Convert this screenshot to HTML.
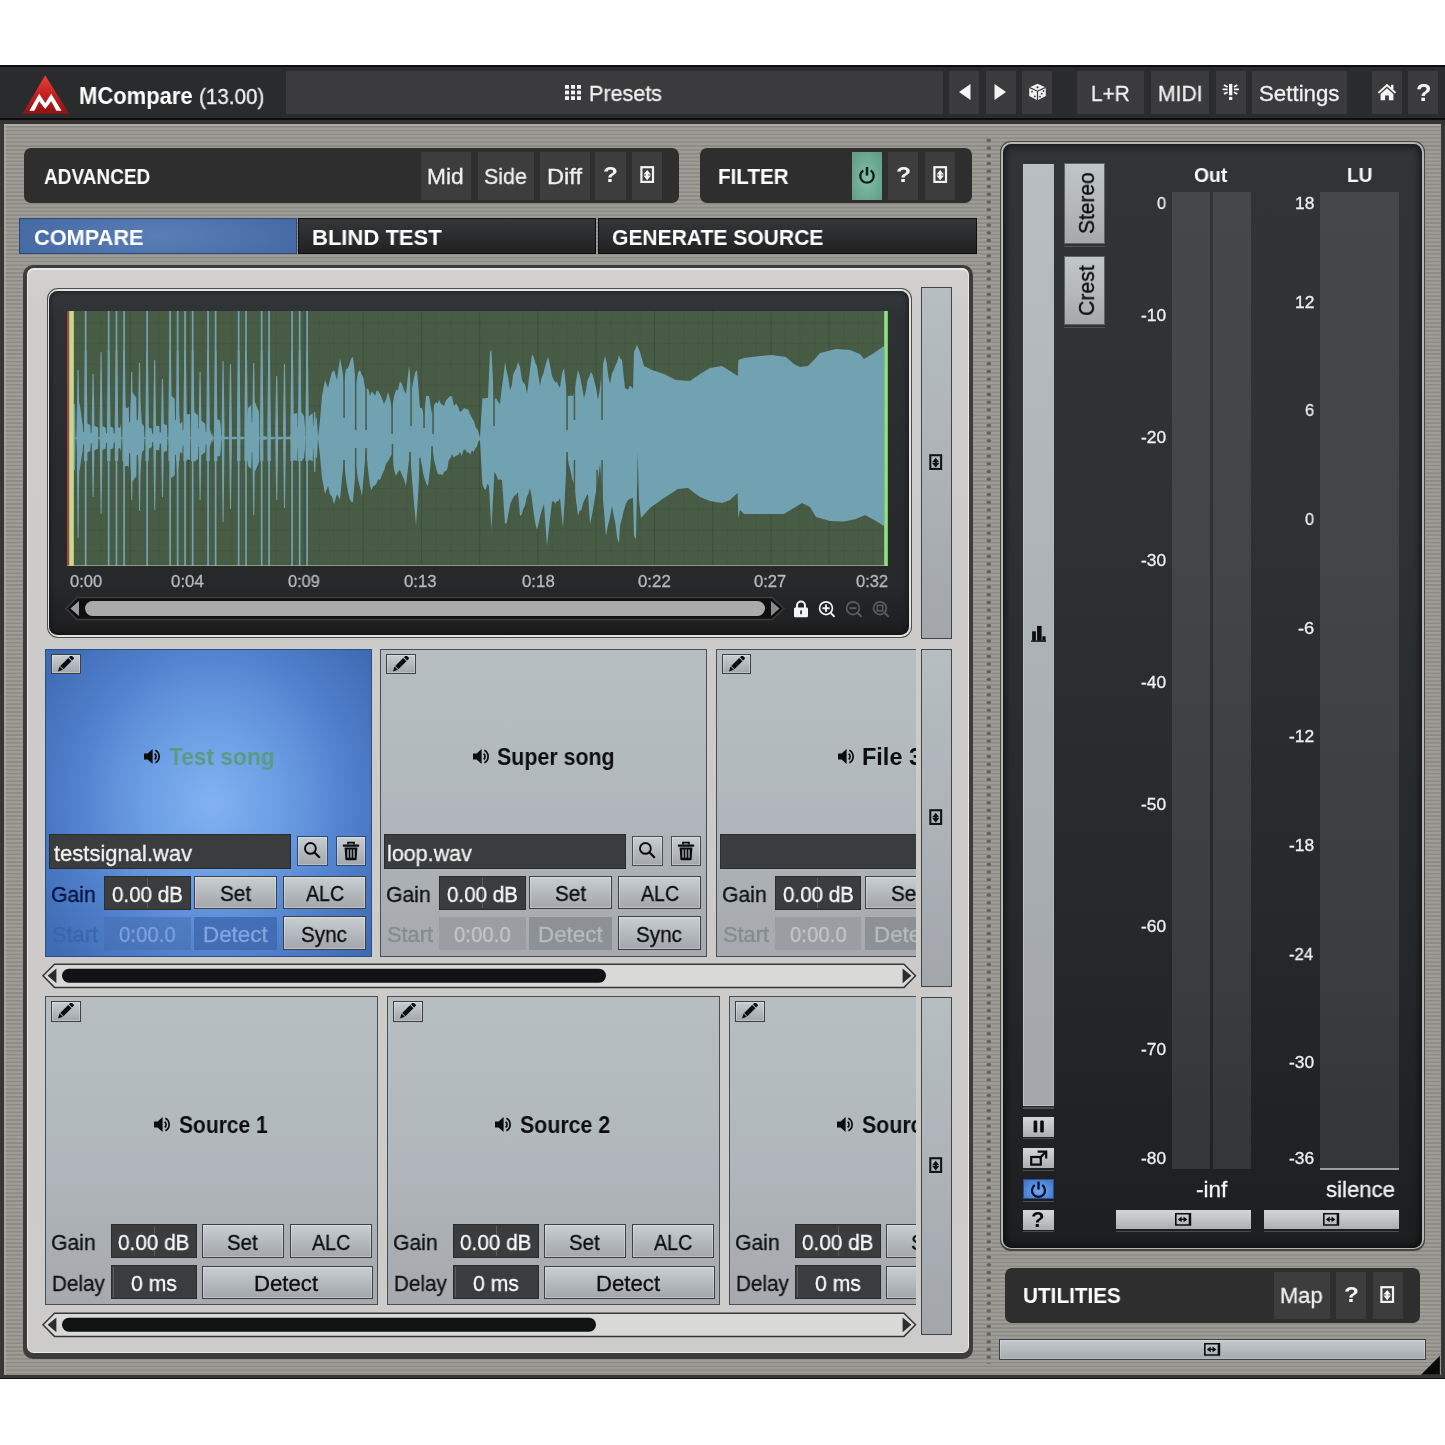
<!DOCTYPE html>
<html lang="en"><head><meta charset="utf-8"><title>MCompare</title>
<style>
html,body{margin:0;padding:0;background:#fff;}
body{width:1445px;height:1445px;overflow:hidden;font-family:"Liberation Sans",sans-serif;}
#root{position:relative;width:1445px;height:1445px;overflow:hidden;background:#fff;}
#root div,#root span.t,#root svg{position:absolute;box-sizing:border-box;}
span.t{white-space:nowrap;transform-origin:0 0;display:block;will-change:transform;}
.tex{background:repeating-linear-gradient(180deg,#9d9c96 0,#9d9c96 1.6px,#8c8b85 2.2px,#8c8b85 3.3px,#9d9c96 3.85px);}
.hb{background:#3b3b3d;}
.pb{background:#3d3d3d;}
.lb{background:linear-gradient(180deg,#c8ced1 0%,#b7bcc0 45%,#a3a6aa 100%);border:1.5px solid #3d4144;box-shadow:inset 0 0 0 1px rgba(255,255,255,.28);}
.df{background:#3a3c3d;border:1px solid #2a2c2d;}
.slot{background:linear-gradient(180deg,#b6bec1 0%,#b2b9bd 45%,#a6a9ae 100%);border:1.5px solid #4a4e52;}
.strip{background:linear-gradient(180deg,#b6bec1 0%,#adb3b7 50%,#a3a6ab 100%);border:1.3px solid #414447;}

</style></head>
<body>
<div id="root">
<div style="left:0px;top:65px;width:1445px;height:1314.3px;background:#363634;"></div>
<div style="left:0px;top:1378.3px;width:1445px;height:1px;background:#101010;"></div>
<div class="tex" style="left:3.9px;top:124.4px;width:1436.7px;height:1250.6px;"></div>
<div style="left:3.9px;top:124.4px;width:1436.7px;height:1.8px;background:#b4b3ad;opacity:.65;"></div>
<div style="left:3.9px;top:126px;width:1.8px;height:1249px;background:#b0afa9;opacity:.55;"></div>
<svg style="left:985px;top:136.8px" width="8" height="1227.4"><defs><pattern id="dots" width="8" height="7.7013" patternUnits="userSpaceOnUse"><ellipse cx="3.8" cy="3.4" rx="2.3" ry="1.7" fill="#605f5a"/></pattern></defs><rect width="8" height="1227.4" fill="url(#dots)"/></svg>
<div style="left:0px;top:65px;width:1445px;height:1.8px;background:#0e0e0f;"></div>
<div style="left:0px;top:66.8px;width:1445px;height:51.8px;background:#2a2b2d;"></div>
<div style="left:0px;top:118.4px;width:1445px;height:1.8px;background:#0d0d0d;"></div>
<div style="left:0px;top:120.2px;width:1445px;height:4.2px;background:#333333;"></div>
<svg style="left:21.5px;top:74px" width="48" height="41" viewBox="0 0 48 41"><defs><linearGradient id="lg" x1="0" y1="0" x2="0" y2="1"><stop offset="0" stop-color="#ee4038"/><stop offset=".5" stop-color="#c4211f"/><stop offset="1" stop-color="#8f1212"/></linearGradient></defs><path d="M23.2 1.3 L47.1 39.7 L.6 39.7 Z" fill="url(#lg)"/><path d="M7.4 36.8 L17.2 19.7 L23.2 28.9 L29.2 19.7 L39.6 36.8 L34.4 36.8 L29.2 27.2 L23.2 34.9 L17.2 27.2 L12.4 36.8 Z" fill="#fff"/></svg>
<span class="t" style="left:79.04px;top:85.13px;font-size:23px;line-height:23px;font-weight:bold;color:#fff;transform:scaleX(0.9568);">MCompare</span>
<span class="t" style="left:199.08px;top:85.55px;font-size:22.5px;line-height:22.5px;font-weight:normal;color:#f2f2f2;transform:scaleX(0.9169);-webkit-text-stroke:.3px #f2f2f2;">(13.00)</span>
<div class="hb" style="left:286px;top:71px;width:657px;height:43.4px;"></div>
<div class="hb" style="left:949px;top:71px;width:30px;height:43.4px;"></div>
<div class="hb" style="left:986px;top:71px;width:30px;height:43.4px;"></div>
<div class="hb" style="left:1022px;top:71px;width:30px;height:43.4px;"></div>
<div class="hb" style="left:1077px;top:71px;width:67px;height:43.4px;"></div>
<div class="hb" style="left:1151px;top:71px;width:58px;height:43.4px;"></div>
<div class="hb" style="left:1216px;top:71px;width:30px;height:43.4px;"></div>
<div class="hb" style="left:1252px;top:71px;width:95px;height:43.4px;"></div>
<div class="hb" style="left:1372px;top:71px;width:30px;height:43.4px;"></div>
<div class="hb" style="left:1408px;top:71px;width:30px;height:43.4px;"></div>
<svg style="left:565px;top:85px" width="16" height="16"><rect x="0" y="0.0" width="4" height="3.8" fill="#f4f4f4"/><rect x="0" y="5.6" width="4" height="3.8" fill="#f4f4f4"/><rect x="0" y="11.2" width="4" height="3.8" fill="#f4f4f4"/><rect x="6" y="0.0" width="4" height="3.8" fill="#f4f4f4"/><rect x="6" y="5.6" width="4" height="3.8" fill="#f4f4f4"/><rect x="6" y="11.2" width="4" height="3.8" fill="#f4f4f4"/><rect x="12" y="0.0" width="4" height="3.8" fill="#f4f4f4"/><rect x="12" y="5.6" width="4" height="3.8" fill="#f4f4f4"/><rect x="12" y="11.2" width="4" height="3.8" fill="#f4f4f4"/></svg>
<span class="t" style="left:589.02px;top:82.97px;font-size:22px;line-height:22px;font-weight:normal;color:#f0f0f0;transform:scaleX(0.9785);-webkit-text-stroke:.3px #f0f0f0;">Presets</span>
<svg style="left:958px;top:83px" width="14" height="18"><path d="M12.5 1 L12.5 17 L1 9 Z" fill="#f4f4f4"/></svg>
<svg style="left:993px;top:83px" width="14" height="18"><path d="M1.5 1 L1.5 17 L13 9 Z" fill="#f4f4f4"/></svg>
<svg style="left:1028px;top:83px" width="19" height="18" viewBox="0 0 19 18"><path d="M9.5 .8 L17.8 4.4 L17.8 13 L9.5 17.2 L1.2 13 L1.2 4.4 Z" fill="#f1f1f1"/><path d="M1.2 4.4 L9.5 8.2 L17.8 4.4 M9.5 8.2 L9.5 17.2" stroke="#3b3b3d" stroke-width="1.2" fill="none"/><circle cx="9.5" cy="4.3" r="1.1" fill="#3b3b3d"/><circle cx="4" cy="8.6" r=".9" fill="#3b3b3d"/><circle cx="6.8" cy="13.4" r=".9" fill="#3b3b3d"/><circle cx="12" cy="13.6" r=".9" fill="#3b3b3d"/><circle cx="13.7" cy="10.7" r=".9" fill="#3b3b3d"/><circle cx="15.5" cy="8" r=".9" fill="#3b3b3d"/></svg>
<span class="t" style="left:1091.05px;top:82.97px;font-size:22px;line-height:22px;font-weight:normal;color:#f0f0f0;transform:scaleX(0.9467);-webkit-text-stroke:.3px #f0f0f0;">L+R</span>
<span class="t" style="left:1158.04px;top:82.97px;font-size:22px;line-height:22px;font-weight:normal;color:#f0f0f0;transform:scaleX(0.9588);-webkit-text-stroke:.3px #f0f0f0;">MIDI</span>
<svg style="left:1221px;top:83px" width="20" height="18" viewBox="0 0 20 18"><rect x="8" y=".9" width="3.3" height="11.4" fill="#f4f4f4"/><rect x="8" y="13.9" width="3.3" height="3.1" fill="#f4f4f4"/><g stroke="#f4f4f4" stroke-width="1.8" fill="none"><path d="M1.6 6.45H6.6M13 6.45H18M3 2L6.6 4M3 10.9L6.6 9.2M16.3 2L13 4M16.3 10.9L13 9.2"/></g></svg>
<span class="t" style="left:1258.99px;top:82.97px;font-size:22px;line-height:22px;font-weight:normal;color:#f0f0f0;transform:scaleX(1.0128);-webkit-text-stroke:.3px #f0f0f0;">Settings</span>
<svg style="left:1377px;top:83px" width="20" height="18" viewBox="0 0 20 18"><path d="M10 .8 L19.2 9.2 L17.8 10.6 L10 3.6 L2.2 10.6 L.8 9.2 Z" fill="#f4f4f4"/><path d="M10 5.2 L16.4 10.9 L16.4 17.2 L11.9 17.2 L11.9 12.4 L8.1 12.4 L8.1 17.2 L3.6 17.2 L3.6 10.9 Z" fill="#f4f4f4"/><rect x="14" y="1.8" width="2.4" height="4.4" fill="#f4f4f4"/></svg>
<span class="t" style="left:1415.92px;top:81.59px;font-size:23.4px;line-height:23.4px;font-weight:bold;color:#f4f4f4;transform:scaleX(1.0833);">?</span>
<div style="left:24px;top:148px;width:655px;height:55px;background:#2e2e2f;border-radius:7px;"></div>
<span class="t" style="left:43.60px;top:165.56px;font-size:22.6px;line-height:22.6px;font-weight:bold;color:#fff;transform:scaleX(0.8410);">ADVANCED</span>
<div class="pb" style="left:420.6px;top:152px;width:50.4px;height:47.5px;"></div>
<div class="pb" style="left:477.6px;top:152px;width:56px;height:47.5px;"></div>
<div class="pb" style="left:540px;top:152px;width:49.6px;height:47.5px;"></div>
<div class="pb" style="left:595px;top:152px;width:31px;height:47.5px;"></div>
<div class="pb" style="left:632px;top:152px;width:30.4px;height:47.5px;"></div>
<span class="t" style="left:427.00px;top:165.56px;font-size:22.6px;line-height:22.6px;font-weight:normal;color:#f0f0f0;transform:scaleX(1.0046);-webkit-text-stroke:.3px #f0f0f0;">Mid</span>
<span class="t" style="left:484.05px;top:165.56px;font-size:22.6px;line-height:22.6px;font-weight:normal;color:#f0f0f0;transform:scaleX(0.9483);-webkit-text-stroke:.3px #f0f0f0;">Side</span>
<span class="t" style="left:546.55px;top:165.56px;font-size:22.6px;line-height:22.6px;font-weight:normal;color:#f0f0f0;transform:scaleX(1.0480);-webkit-text-stroke:.3px #f0f0f0;">Diff</span>
<span class="t" style="left:603.30px;top:163.60px;font-size:22.2px;line-height:22.2px;font-weight:bold;color:#f4f4f4;transform:scaleX(1.1000);">?</span>
<svg style="left:639.7px;top:166px" width="15" height="18" viewBox="0 0 15 18"><rect x="1.4" y="1.2" width="11.6" height="14.7" fill="none" stroke="#f4f4f4" stroke-width="2.2"/><path d="M7.2 3.9 L11 8.6 L8.3 8.6 L8.3 9.6 L11 9.6 L7.2 14.3 L3.4 9.6 L6.1 9.6 L6.1 8.6 L3.4 8.6 Z" fill="#f4f4f4"/></svg>
<div style="left:700px;top:148px;width:272px;height:55px;background:#2e2e2f;border-radius:7px;"></div>
<span class="t" style="left:718.09px;top:165.56px;font-size:22.6px;line-height:22.6px;font-weight:bold;color:#fff;transform:scaleX(0.9123);">FILTER</span>
<div style="left:852px;top:152px;width:30px;height:47.5px;background:radial-gradient(ellipse at 50% 55%,#86bfa9 0%,#6ba791 60%,#5f9a85 100%);"></div>
<svg style="left:857px;top:165px" width="20" height="21" viewBox="0 0 20 21"><path d="M6.3 5.4 A6.7 6.7 0 1 0 13.7 5.4" fill="none" stroke="#0c1c16" stroke-width="2.3"/><path d="M10 2 L10 10.6" stroke="#0c1c16" stroke-width="2.5"/></svg>
<div class="pb" style="left:888.4px;top:152px;width:30px;height:47.5px;"></div>
<div class="pb" style="left:925px;top:152px;width:30px;height:47.5px;"></div>
<span class="t" style="left:895.88px;top:163.60px;font-size:22.2px;line-height:22.2px;font-weight:bold;color:#f4f4f4;transform:scaleX(1.1167);">?</span>
<svg style="left:932.5px;top:166px" width="15" height="18" viewBox="0 0 15 18"><rect x="1.4" y="1.2" width="11.6" height="14.7" fill="none" stroke="#f4f4f4" stroke-width="2.2"/><path d="M7.2 3.9 L11 8.6 L8.3 8.6 L8.3 9.6 L11 9.6 L7.2 14.3 L3.4 9.6 L6.1 9.6 L6.1 8.6 L3.4 8.6 Z" fill="#f4f4f4"/></svg>
<div style="left:19px;top:217.6px;width:277.5px;height:36px;background:radial-gradient(ellipse 75% 160% at 50% 50%,#5a7fb6 0%,#4a6ea8 55%,#3d619b 100%);border:1px solid #2b4877;"></div>
<span class="t" style="left:34.00px;top:227.23px;font-size:22.4px;line-height:22.4px;font-weight:bold;color:#fff;transform:scaleX(0.9712);">COMPARE</span>
<div style="left:297.5px;top:217.6px;width:298.5px;height:36px;background:linear-gradient(180deg,#353637 0%,#2a2b2c 55%,#202122 100%);border:1px solid #0e0e0f;"></div>
<span class="t" style="left:311.62px;top:227.23px;font-size:22.4px;line-height:22.4px;font-weight:bold;color:#fff;transform:scaleX(0.9834);">BLIND TEST</span>
<div style="left:597.5px;top:217.6px;width:379.5px;height:36px;background:linear-gradient(180deg,#353637 0%,#2a2b2c 55%,#202122 100%);border:1px solid #0e0e0f;"></div>
<span class="t" style="left:611.60px;top:227.23px;font-size:22.4px;line-height:22.4px;font-weight:bold;color:#fff;transform:scaleX(0.9403);">GENERATE SOURCE</span>
<div style="left:23px;top:264.8px;width:950.2px;height:1094.2px;background:#3c3c3a;border-radius:10px;"></div>
<div style="left:26.7px;top:268.3px;width:942.8px;height:1085.2px;background:#eaeae8;border-radius:6.5px;"></div>
<div style="left:27.9px;top:269.6px;width:940.4px;height:1082.7px;background:linear-gradient(180deg,#d2d1cf 0%,#cdccca 4%,#cccbc9 60%,#cdccca 100%);border-radius:5.5px;"></div>
<div style="left:46.6px;top:288px;width:865.3px;height:350.2px;background:#4c4c4a;border-radius:11px;"></div>
<div style="left:47.7px;top:289.2px;width:862.9px;height:347.8px;background:#e2e2e1;border-radius:10px;"></div>
<div style="left:49.3px;top:290.9px;width:859.5px;height:344.4px;background:linear-gradient(180deg,#33373a 0%,#2d3134 8%,#26282a 85%,#1c1d1f 100%);border-radius:8.5px;box-shadow:inset 0 0 5px 1px rgba(0,0,0,.45);"></div>
<svg style="left:67px;top:311px" width="821" height="255.4" viewBox="0 0 821 255.4"><rect width="821" height="255.4" fill="#475b45"/><path d="M5.0 0V255.4" stroke="#3a4e38" stroke-width="1.2" opacity=".8"/><path d="M63.2 0V255.4" stroke="#3a4e38" stroke-width="1.2" opacity=".8"/><path d="M121.5 0V255.4" stroke="#3a4e38" stroke-width="1.2" opacity=".8"/><path d="M179.7 0V255.4" stroke="#3a4e38" stroke-width="1.2" opacity=".8"/><path d="M237.9 0V255.4" stroke="#3a4e38" stroke-width="1.2" opacity=".8"/><path d="M296.2 0V255.4" stroke="#3a4e38" stroke-width="1.2" opacity=".8"/><path d="M354.4 0V255.4" stroke="#3a4e38" stroke-width="1.2" opacity=".8"/><path d="M412.7 0V255.4" stroke="#3a4e38" stroke-width="1.2" opacity=".8"/><path d="M470.9 0V255.4" stroke="#3a4e38" stroke-width="1.2" opacity=".8"/><path d="M529.2 0V255.4" stroke="#3a4e38" stroke-width="1.2" opacity=".8"/><path d="M587.5 0V255.4" stroke="#3a4e38" stroke-width="1.2" opacity=".8"/><path d="M645.7 0V255.4" stroke="#3a4e38" stroke-width="1.2" opacity=".8"/><path d="M704.0 0V255.4" stroke="#3a4e38" stroke-width="1.2" opacity=".8"/><path d="M762.2 0V255.4" stroke="#3a4e38" stroke-width="1.2" opacity=".8"/><path d="M820.5 0V255.4" stroke="#3a4e38" stroke-width="1.2" opacity=".8"/><path d="M19.5 0V255.4" stroke="#3c503a" stroke-width="1" opacity=".35"/><path d="M34.1 0V255.4" stroke="#3c503a" stroke-width="1" opacity=".35"/><path d="M48.6 0V255.4" stroke="#3c503a" stroke-width="1" opacity=".35"/><path d="M77.8 0V255.4" stroke="#3c503a" stroke-width="1" opacity=".35"/><path d="M92.3 0V255.4" stroke="#3c503a" stroke-width="1" opacity=".35"/><path d="M106.9 0V255.4" stroke="#3c503a" stroke-width="1" opacity=".35"/><path d="M136.0 0V255.4" stroke="#3c503a" stroke-width="1" opacity=".35"/><path d="M150.6 0V255.4" stroke="#3c503a" stroke-width="1" opacity=".35"/><path d="M165.1 0V255.4" stroke="#3c503a" stroke-width="1" opacity=".35"/><path d="M194.3 0V255.4" stroke="#3c503a" stroke-width="1" opacity=".35"/><path d="M208.8 0V255.4" stroke="#3c503a" stroke-width="1" opacity=".35"/><path d="M223.4 0V255.4" stroke="#3c503a" stroke-width="1" opacity=".35"/><path d="M252.5 0V255.4" stroke="#3c503a" stroke-width="1" opacity=".35"/><path d="M267.1 0V255.4" stroke="#3c503a" stroke-width="1" opacity=".35"/><path d="M281.6 0V255.4" stroke="#3c503a" stroke-width="1" opacity=".35"/><path d="M310.8 0V255.4" stroke="#3c503a" stroke-width="1" opacity=".35"/><path d="M325.3 0V255.4" stroke="#3c503a" stroke-width="1" opacity=".35"/><path d="M339.9 0V255.4" stroke="#3c503a" stroke-width="1" opacity=".35"/><path d="M369.0 0V255.4" stroke="#3c503a" stroke-width="1" opacity=".35"/><path d="M383.6 0V255.4" stroke="#3c503a" stroke-width="1" opacity=".35"/><path d="M398.1 0V255.4" stroke="#3c503a" stroke-width="1" opacity=".35"/><path d="M427.3 0V255.4" stroke="#3c503a" stroke-width="1" opacity=".35"/><path d="M441.8 0V255.4" stroke="#3c503a" stroke-width="1" opacity=".35"/><path d="M456.4 0V255.4" stroke="#3c503a" stroke-width="1" opacity=".35"/><path d="M485.5 0V255.4" stroke="#3c503a" stroke-width="1" opacity=".35"/><path d="M500.1 0V255.4" stroke="#3c503a" stroke-width="1" opacity=".35"/><path d="M514.6 0V255.4" stroke="#3c503a" stroke-width="1" opacity=".35"/><path d="M543.8 0V255.4" stroke="#3c503a" stroke-width="1" opacity=".35"/><path d="M558.3 0V255.4" stroke="#3c503a" stroke-width="1" opacity=".35"/><path d="M572.9 0V255.4" stroke="#3c503a" stroke-width="1" opacity=".35"/><path d="M602.0 0V255.4" stroke="#3c503a" stroke-width="1" opacity=".35"/><path d="M616.6 0V255.4" stroke="#3c503a" stroke-width="1" opacity=".35"/><path d="M631.1 0V255.4" stroke="#3c503a" stroke-width="1" opacity=".35"/><path d="M660.3 0V255.4" stroke="#3c503a" stroke-width="1" opacity=".35"/><path d="M674.8 0V255.4" stroke="#3c503a" stroke-width="1" opacity=".35"/><path d="M689.4 0V255.4" stroke="#3c503a" stroke-width="1" opacity=".35"/><path d="M718.5 0V255.4" stroke="#3c503a" stroke-width="1" opacity=".35"/><path d="M733.1 0V255.4" stroke="#3c503a" stroke-width="1" opacity=".35"/><path d="M747.6 0V255.4" stroke="#3c503a" stroke-width="1" opacity=".35"/><path d="M776.8 0V255.4" stroke="#3c503a" stroke-width="1" opacity=".35"/><path d="M791.3 0V255.4" stroke="#3c503a" stroke-width="1" opacity=".35"/><path d="M805.9 0V255.4" stroke="#3c503a" stroke-width="1" opacity=".35"/><path d="M0 11.9H821.0" stroke="#3c503a" stroke-width="1" opacity=".4"/><path d="M0 32.6H821.0" stroke="#3c503a" stroke-width="1" opacity=".4"/><path d="M0 53.3H821.0" stroke="#3c503a" stroke-width="1" opacity=".4"/><path d="M0 74.0H821.0" stroke="#3c503a" stroke-width="1" opacity=".4"/><path d="M0 94.7H821.0" stroke="#3c503a" stroke-width="1" opacity=".4"/><path d="M0 115.4H821.0" stroke="#3c503a" stroke-width="1" opacity=".4"/><path d="M0 136.1H821.0" stroke="#3c503a" stroke-width="1" opacity=".4"/><path d="M0 156.8H821.0" stroke="#3c503a" stroke-width="1" opacity=".4"/><path d="M0 177.5H821.0" stroke="#3c503a" stroke-width="1" opacity=".4"/><path d="M0 198.2H821.0" stroke="#3c503a" stroke-width="1" opacity=".4"/><path d="M0 218.9H821.0" stroke="#3c503a" stroke-width="1" opacity=".4"/><path d="M0 239.6H821.0" stroke="#3c503a" stroke-width="1" opacity=".4"/><g fill="#70a2b2"><rect x="17.8" y="0" width="1.7" height="255.4"/><path d="M17.8 40 L17.0 110 L17.0 150 L20.4 150 L20.4 110 L19.5 40Z"/><rect x="40.8" y="0" width="1.7" height="255.4"/><path d="M40.8 40 L40.0 110 L40.0 150 L43.4 150 L43.4 110 L42.5 40Z"/><rect x="48.6" y="0" width="1.7" height="255.4"/><path d="M48.6 40 L47.8 110 L47.8 150 L51.2 150 L51.2 110 L50.3 40Z"/><rect x="56.2" y="0" width="1.7" height="255.4"/><path d="M56.2 40 L55.4 110 L55.4 150 L58.8 150 L58.8 110 L57.9 40Z"/><rect x="79.2" y="0" width="1.7" height="255.4"/><path d="M79.2 40 L78.4 110 L78.4 150 L81.8 150 L81.8 110 L80.9 40Z"/><rect x="102.2" y="0" width="1.7" height="255.4"/><path d="M102.2 40 L101.4 110 L101.4 150 L104.8 150 L104.8 110 L103.9 40Z"/><rect x="109.8" y="0" width="1.7" height="255.4"/><path d="M109.8 40 L109.0 110 L109.0 150 L112.4 150 L112.4 110 L111.5 40Z"/><rect x="117.2" y="0" width="1.7" height="255.4"/><path d="M117.2 40 L116.4 110 L116.4 150 L119.8 150 L119.8 110 L118.9 40Z"/><rect x="124.8" y="0" width="1.7" height="255.4"/><path d="M124.8 40 L124.0 110 L124.0 150 L127.4 150 L127.4 110 L126.5 40Z"/><rect x="140.2" y="0" width="1.7" height="255.4"/><path d="M140.2 40 L139.4 110 L139.4 150 L142.8 150 L142.8 110 L141.9 40Z"/><rect x="147.8" y="0" width="1.7" height="255.4"/><path d="M147.8 40 L147.0 110 L147.0 150 L150.4 150 L150.4 110 L149.5 40Z"/><rect x="170.8" y="0" width="1.7" height="255.4"/><path d="M170.8 40 L170.0 110 L170.0 150 L173.4 150 L173.4 110 L172.5 40Z"/><rect x="178.2" y="0" width="1.7" height="255.4"/><path d="M178.2 40 L177.4 110 L177.4 150 L180.8 150 L180.8 110 L179.9 40Z"/><rect x="193.8" y="0" width="1.7" height="255.4"/><path d="M193.8 40 L193.0 110 L193.0 150 L196.4 150 L196.4 110 L195.5 40Z"/><rect x="201.2" y="0" width="1.7" height="255.4"/><path d="M201.2 40 L200.4 110 L200.4 150 L203.8 150 L203.8 110 L202.9 40Z"/><rect x="224.2" y="0" width="1.7" height="255.4"/><path d="M224.2 40 L223.4 110 L223.4 150 L226.8 150 L226.8 110 L225.9 40Z"/><rect x="231.8" y="0" width="1.7" height="255.4"/><path d="M231.8 40 L231.0 110 L231.0 150 L234.4 150 L234.4 110 L233.5 40Z"/><rect x="239.2" y="0" width="1.7" height="255.4"/><path d="M239.2 40 L238.4 110 L238.4 150 L241.8 150 L241.8 110 L240.9 40Z"/><path d="M10.5 59.0 L9.6 117.0 L9.8 139.0 L10.6 227.0 L11.6 227.0 L12.4 139.0 L12.5 117.0 L11.6 59.0Z"/><path d="M25.5 63.0 L24.6 117.0 L24.8 139.0 L25.6 186.0 L26.6 186.0 L27.4 139.0 L27.5 117.0 L26.6 63.0Z"/><path d="M33.5 41.0 L32.6 117.0 L32.8 139.0 L33.6 203.0 L34.6 203.0 L35.4 139.0 L35.5 117.0 L34.6 41.0Z"/><path d="M64.1 61.0 L63.2 117.0 L63.4 139.0 L64.2 189.0 L65.2 189.0 L66.0 139.0 L66.1 117.0 L65.2 61.0Z"/><path d="M71.9 52.0 L71.0 117.0 L71.2 139.0 L72.0 200.0 L73.0 200.0 L73.8 139.0 L73.9 117.0 L73.0 52.0Z"/><path d="M87.1 49.0 L86.2 117.0 L86.4 139.0 L87.2 199.0 L88.2 199.0 L89.0 139.0 L89.1 117.0 L88.2 49.0Z"/><path d="M94.9 68.0 L94.0 117.0 L94.2 139.0 L95.0 186.0 L96.0 186.0 L96.8 139.0 L96.9 117.0 L96.0 68.0Z"/><path d="M132.5 61.0 L131.6 117.0 L131.8 139.0 L132.6 189.0 L133.6 189.0 L134.4 139.0 L134.5 117.0 L133.6 61.0Z"/><path d="M155.5 50.0 L154.6 117.0 L154.8 139.0 L155.6 211.0 L156.6 211.0 L157.4 139.0 L157.5 117.0 L156.6 50.0Z"/><path d="M162.9 53.0 L162.0 117.0 L162.2 139.0 L163.0 198.0 L164.0 198.0 L164.8 139.0 L164.9 117.0 L164.0 53.0Z"/><path d="M186.1 52.0 L185.2 117.0 L185.4 139.0 L186.2 204.0 L187.2 204.0 L188.0 139.0 L188.1 117.0 L187.2 52.0Z"/><path d="M209.1 65.0 L208.2 117.0 L208.4 139.0 L209.2 189.0 L210.2 189.0 L211.0 139.0 L211.1 117.0 L210.2 65.0Z"/><path d="M216.9 53.0 L216.0 117.0 L216.2 139.0 L217.0 197.0 L218.0 197.0 L218.8 139.0 L218.9 117.0 L218.0 53.0Z"/><path d="M247.1 101.0 L246.2 117.0 L246.4 139.0 L247.2 161.0 L248.2 161.0 L249.0 139.0 L249.1 117.0 L248.2 101.0Z"/><path d="M7.0 93.0 L8.0 93.3 L8.4 126.2 L9.5 126.2 L11.9 90.7 L13.0 95.0 L15.4 113.0 L15.7 113.0 L16.1 120.7 L17.2 120.8 L19.6 111.9 L23.0 114.0 L23.3 114.3 L23.7 121.5 L24.8 122.0 L25.0 116.0 L27.2 114.8 L31.0 116.2 L31.4 126.2 L32.5 126.2 L34.9 115.1 L38.7 116.5 L39.1 122.3 L40.2 122.3 L42.6 115.4 L46.3 116.8 L46.7 122.4 L47.8 122.4 L50.2 115.7 L53.0 117.0 L54.0 112.5 L54.4 126.2 L55.5 126.2 L56.6 101.0 L57.9 96.6 L61.0 97.0 L61.7 94.8 L62.1 111.9 L63.2 110.2 L64.0 87.0 L65.6 81.3 L68.0 85.0 L69.3 86.6 L69.7 109.0 L70.8 109.6 L73.0 91.0 L73.2 89.6 L75.0 113.0 L77.0 115.0 L77.4 126.2 L78.5 126.2 L79.0 117.0 L80.9 116.1 L84.7 117.7 L85.1 122.8 L86.2 122.9 L87.0 118.0 L88.6 114.3 L89.0 115.0 L92.3 114.7 L92.7 121.5 L93.8 121.4 L96.2 112.9 L100.0 114.1 L100.4 126.2 L101.0 126.2 L101.5 126.2 L103.9 85.3 L104.0 84.4 L107.7 87.8 L108.1 109.3 L109.2 109.1 L110.0 87.0 L111.6 97.4 L113.0 113.0 L115.3 110.2 L115.7 119.2 L116.8 118.6 L118.0 107.0 L119.2 103.5 L123.0 103.0 L123.0 103.0 L123.4 126.2 L124.5 126.2 L126.9 100.7 L130.7 104.0 L131.0 104.0 L131.1 116.8 L132.2 118.5 L133.0 111.0 L134.6 109.7 L138.3 113.0 L138.7 120.8 L139.8 121.0 L141.0 114.0 L142.2 116.3 L145.0 125.0 L146.0 121.5 L146.4 126.2 L147.5 126.2 L149.0 111.0 L149.9 108.6 L153.0 109.0 L153.7 114.7 L154.1 123.0 L155.0 126.5 L155.2 126.5 L157.6 125.7 L161.3 125.8 L161.7 126.5 L162.8 126.5 L165.2 125.7 L169.0 125.8 L169.4 126.2 L170.5 126.2 L172.9 125.7 L176.7 125.8 L177.1 126.5 L178.2 126.5 L179.0 125.8 L180.6 100.3 L181.0 97.0 L184.3 93.7 L184.7 111.8 L185.8 111.3 L186.0 92.0 L188.2 91.6 L192.0 101.0 L192.0 101.1 L192.4 126.2 L193.5 126.2 L195.0 125.0 L195.9 124.9 L199.7 125.6 L200.1 126.4 L201.0 126.5 L201.2 126.5 L203.6 125.7 L207.3 125.8 L207.7 126.5 L208.8 126.5 L211.2 125.7 L215.0 125.8 L215.4 126.2 L216.5 126.2 L218.9 125.7 L222.7 125.8 L223.0 125.8 L223.1 126.1 L224.2 121.5 L225.0 107.0 L226.6 102.8 L230.0 102.0 L230.3 102.1 L230.7 115.9 L231.8 116.1 L234.2 101.0 L237.0 105.0 L238.0 115.7 L238.4 126.2 L239.0 126.2 L239.5 126.2 L241.0 109.0 L241.9 105.3 L245.7 102.0 L246.1 115.5 L247.0 114.9 L247.2 115.1 L249.6 105.4 L250.0 109.0 L251.0 126.2 L253.0 109.0 L255.0 85.0 L258.0 69.0 L261.0 77.0 L263.0 68.3 L265.0 61.1 L267.0 59.0 L270.0 69.0 L273.0 47.0 L275.0 57.6 L277.0 69.0 L279.0 58.5 L281.0 57.0 L282.7 52.1 L284.3 47.2 L286.0 46.0 L289.0 73.0 L291.0 61.4 L293.0 59.0 L294.7 63.6 L296.3 66.3 L298.0 77.0 L299.7 77.7 L301.3 77.8 L303.0 85.0 L304.7 80.3 L306.3 82.3 L308.0 84.8 L309.7 79.5 L311.3 79.9 L313.0 83.0 L315.0 87.4 L317.0 93.0 L319.0 88.6 L321.0 81.0 L323.0 88.0 L325.0 97.0 L327.0 85.8 L329.0 79.0 L331.0 78.8 L333.0 70.3 L335.0 73.0 L337.0 79.0 L339.0 83.0 L342.0 55.0 L345.0 77.0 L346.7 68.0 L348.3 61.0 L350.0 59.0 L353.0 97.0 L355.0 96.8 L357.0 105.0 L359.0 85.0 L362.0 85.0 L365.0 103.0 L367.0 94.2 L369.0 91.0 L370.6 92.5 L372.2 88.9 L373.8 92.5 L375.4 93.7 L377.0 95.0 L379.0 89.3 L381.0 87.2 L383.0 85.0 L385.0 85.4 L387.0 95.0 L389.0 92.4 L391.0 95.4 L393.0 101.0 L395.0 99.8 L397.0 97.0 L399.0 98.0 L401.0 98.2 L403.0 103.1 L405.0 107.0 L407.0 110.2 L409.0 117.0 L411.0 118.9 L413.0 126.6 L415.4 87.0 L417.3 87.6 L419.1 86.9 L421.0 87.0 L423.0 41.0 L424.4 39.0 L427.0 89.0 L429.0 87.0 L431.0 90.7 L433.0 93.0 L434.7 77.7 L436.3 66.1 L438.0 51.0 L439.7 60.4 L441.3 66.7 L443.0 79.0 L444.6 75.3 L446.2 63.6 L447.8 60.1 L449.4 56.9 L451.0 51.0 L453.0 56.1 L455.0 69.0 L456.7 72.1 L458.3 73.6 L460.0 83.0 L461.7 69.3 L463.3 56.7 L465.0 43.0 L466.7 46.0 L468.3 52.1 L470.0 55.0 L473.0 75.0 L474.6 66.4 L476.2 63.3 L477.8 56.8 L479.4 50.9 L481.0 46.0 L483.0 53.7 L485.0 65.0 L486.6 68.3 L488.2 71.4 L489.8 70.5 L491.4 74.2 L493.0 77.0 L495.0 62.4 L497.0 57.0 L500.0 85.0 L502.0 84.9 L504.0 84.5 L506.0 85.0 L507.7 78.3 L509.3 68.4 L511.0 59.0 L513.0 65.3 L515.0 75.4 L517.0 87.0 L518.8 80.2 L520.5 69.2 L522.2 65.7 L524.0 61.0 L525.8 64.2 L527.5 70.8 L529.2 77.4 L531.0 89.0 L532.8 78.4 L534.5 62.9 L536.2 52.7 L538.0 45.0 L539.7 52.1 L541.3 64.8 L543.0 73.0 L544.8 62.8 L546.6 59.5 L548.4 54.4 L550.2 51.0 L552.0 44.0 L553.0 47.0 L555.0 49.0 L558.0 77.0 L559.6 77.9 L561.2 78.4 L562.8 74.5 L564.4 75.7 L566.0 78.0 L567.0 41.0 L570.0 34.0 L573.0 41.0 L577.0 55.0 L585.0 59.0 L597.0 63.0 L609.0 69.0 L623.0 70.0 L633.0 63.0 L643.0 57.0 L655.0 55.0 L663.0 60.0 L670.8 65.0 L671.4 49.0 L677.0 47.0 L693.0 45.0 L705.0 44.0 L719.0 46.0 L727.0 53.0 L733.0 56.0 L741.0 55.0 L747.0 49.0 L753.0 42.0 L769.0 38.0 L783.0 39.0 L793.0 43.0 L797.0 48.0 L807.0 42.0 L817.0 35.0 L817.0 215.0 L809.0 210.0 L798.0 204.0 L789.0 208.0 L777.0 210.6 L763.0 210.0 L749.0 206.0 L743.0 196.0 L735.0 192.0 L727.0 197.0 L717.0 203.0 L693.0 203.0 L677.0 203.0 L673.0 199.0 L671.4 207.0 L670.6 182.0 L663.0 189.0 L655.0 192.0 L643.0 190.0 L633.0 186.0 L621.0 177.0 L611.0 178.0 L597.0 187.0 L583.0 197.0 L574.0 207.0 L572.0 189.0 L571.4 169.0 L570.6 141.0 L570.2 169.0 L569.0 228.0 L567.0 225.0 L566.0 187.0 L564.3 187.4 L562.7 187.9 L561.0 189.0 L559.0 192.6 L557.0 199.0 L555.0 207.4 L553.0 215.0 L552.0 232.0 L550.2 227.2 L548.5 212.9 L546.8 204.7 L545.0 195.0 L543.0 206.6 L541.0 214.1 L539.0 225.0 L537.0 199.7 L535.0 177.6 L533.0 153.0 L531.3 166.6 L529.7 176.6 L528.0 186.4 L526.3 196.5 L524.7 205.4 L523.0 213.0 L521.0 183.0 L519.3 185.0 L517.7 188.4 L516.0 192.4 L514.3 199.5 L512.7 199.6 L511.0 205.0 L509.0 189.2 L507.0 173.0 L505.2 168.2 L503.5 160.0 L501.8 153.8 L500.0 141.0 L498.0 183.8 L496.0 217.0 L493.0 187.0 L491.4 190.3 L489.8 190.0 L488.2 192.8 L486.6 190.0 L485.0 191.0 L483.3 204.9 L481.7 219.7 L480.0 235.0 L477.0 193.0 L475.2 198.5 L473.5 204.1 L471.8 211.8 L470.0 219.0 L468.2 211.9 L466.5 200.7 L464.8 187.0 L463.0 177.0 L461.3 182.9 L459.7 185.9 L458.0 194.8 L456.3 198.1 L454.7 203.5 L453.0 205.0 L451.0 181.0 L449.0 183.8 L447.0 185.3 L445.0 189.0 L443.2 193.2 L441.5 202.3 L439.8 211.8 L438.0 213.0 L435.0 169.0 L433.1 168.2 L431.2 169.0 L429.3 164.3 L427.4 161.0 L424.4 219.0 L422.0 175.0 L420.4 172.8 L418.7 178.8 L417.0 177.4 L415.4 173.0 L413.0 129.0 L411.4 130.2 L409.8 136.1 L408.2 137.6 L406.6 141.3 L405.0 139.0 L403.3 143.7 L401.6 141.2 L399.9 141.6 L398.1 138.2 L396.4 139.5 L394.7 144.9 L393.0 141.0 L391.4 143.9 L389.8 144.4 L388.2 145.4 L386.6 146.6 L385.0 143.0 L383.4 147.3 L381.8 149.1 L380.2 158.6 L378.6 159.9 L377.0 161.0 L375.4 164.5 L373.8 163.3 L372.2 163.6 L370.6 162.4 L369.0 157.0 L367.0 148.6 L365.0 135.0 L363.0 158.9 L361.0 175.0 L359.4 172.9 L357.8 168.3 L356.2 162.8 L354.6 153.2 L353.0 147.0 L351.0 185.3 L349.0 215.0 L347.0 192.5 L345.0 167.9 L343.0 141.0 L341.0 157.4 L339.0 175.0 L337.0 168.5 L335.0 163.9 L333.0 159.0 L331.0 160.7 L329.0 165.0 L327.0 158.6 L325.0 143.0 L323.0 146.6 L321.0 150.3 L319.0 153.0 L317.0 159.7 L315.0 163.8 L313.0 169.0 L311.3 168.3 L309.7 172.0 L308.0 174.4 L306.3 175.1 L304.7 179.0 L303.0 175.0 L301.0 159.2 L299.0 137.0 L297.0 161.9 L295.0 185.0 L293.0 176.6 L291.0 168.4 L289.0 155.0 L286.0 191.0 L284.3 191.0 L282.7 188.1 L281.0 181.0 L279.0 168.9 L277.0 149.0 L275.0 167.3 L273.0 189.0 L270.0 183.0 L267.0 193.0 L265.0 185.8 L263.0 183.5 L261.0 175.0 L258.0 183.0 L255.0 167.0 L253.0 145.0 L251.0 127.8 L250.0 145.0 L249.6 148.3 L247.2 138.1 L247.0 138.2 L246.1 137.8 L245.7 150.5 L241.9 148.3 L241.0 145.0 L239.5 127.8 L239.0 127.8 L238.4 127.8 L238.0 137.3 L237.0 147.0 L234.2 150.7 L231.8 137.0 L230.7 137.2 L230.3 149.9 L230.0 150.0 L226.6 148.9 L225.0 145.0 L224.2 132.0 L223.1 127.8 L223.0 128.2 L222.7 128.2 L218.9 128.3 L216.5 127.8 L215.4 127.8 L215.0 128.2 L211.2 128.3 L208.8 127.5 L207.7 127.5 L207.3 128.2 L203.6 128.3 L201.2 127.5 L201.0 127.5 L200.1 127.6 L199.7 128.4 L195.9 129.1 L195.0 129.0 L193.5 127.8 L192.4 127.8 L192.0 150.9 L192.0 151.0 L188.2 160.2 L186.0 160.0 L185.8 141.8 L184.7 141.3 L184.3 158.3 L181.0 155.0 L180.6 152.0 L179.0 128.2 L178.2 127.5 L177.1 127.5 L176.7 128.2 L172.9 128.3 L170.5 127.8 L169.4 127.8 L169.0 128.2 L165.2 128.3 L162.8 127.5 L161.7 127.5 L161.3 128.2 L157.6 128.3 L155.2 127.5 L155.0 127.5 L154.1 131.0 L153.7 139.3 L153.0 145.0 L149.9 145.4 L149.0 143.0 L147.5 127.8 L146.4 127.8 L146.0 132.5 L145.0 129.0 L142.2 137.7 L141.0 140.0 L139.8 133.0 L138.7 133.2 L138.3 141.0 L134.6 144.3 L133.0 143.0 L132.2 135.1 L131.1 136.4 L131.0 148.0 L130.7 148.0 L126.9 151.1 L124.5 127.8 L123.4 127.8 L123.0 149.0 L123.0 149.0 L119.2 148.3 L118.0 145.0 L116.8 134.7 L115.7 134.3 L115.3 142.9 L113.0 141.0 L111.6 155.5 L110.0 165.0 L109.2 144.0 L108.1 143.8 L107.7 164.2 L104.0 167.3 L103.9 166.5 L101.5 127.8 L101.0 127.8 L100.4 127.8 L100.0 139.9 L96.2 141.1 L93.8 132.6 L92.7 132.5 L92.3 139.3 L89.0 139.0 L88.6 139.7 L87.0 136.0 L86.2 131.1 L85.1 131.2 L84.7 136.3 L80.9 137.9 L79.0 137.0 L78.5 127.8 L77.4 127.8 L77.0 139.0 L75.0 141.0 L73.2 162.4 L73.0 161.0 L70.8 143.5 L69.7 144.1 L69.3 165.4 L68.0 167.0 L65.6 170.4 L64.0 165.0 L63.2 142.9 L62.1 141.2 L61.7 157.2 L61.0 155.0 L57.9 155.2 L56.6 151.0 L55.5 127.8 L54.4 127.8 L54.0 140.9 L53.0 137.0 L50.2 138.3 L47.8 131.6 L46.7 131.6 L46.3 137.2 L42.6 138.6 L40.2 131.7 L39.1 131.7 L38.7 137.5 L34.9 138.9 L32.5 127.8 L31.4 127.8 L31.0 137.8 L27.2 139.2 L25.0 138.0 L24.8 132.0 L23.7 132.5 L23.3 139.7 L23.0 140.0 L19.6 142.1 L17.2 133.2 L16.1 133.3 L15.7 141.0 L15.4 141.0 L13.0 157.0 L11.9 161.0 L9.5 127.8 L8.4 127.8 L8.0 158.7 L7.0 159.0 Z"/></g><rect x="276.3" y="0" width="1.5" height="107.0" fill="#475b45"/><rect x="287.9" y="0" width="1.5" height="119.0" fill="#475b45"/><rect x="298.3" y="0" width="1.5" height="119.0" fill="#475b45"/><rect x="324.3" y="0" width="1.5" height="123.0" fill="#475b45"/><rect x="343.3" y="0" width="1.5" height="115.0" fill="#475b45"/><rect x="356.3" y="0" width="1.5" height="117.0" fill="#475b45"/><rect x="365.3" y="0" width="1.5" height="123.0" fill="#475b45"/><rect x="426.3" y="0" width="1.5" height="115.0" fill="#475b45"/><rect x="499.3" y="0" width="1.5" height="119.0" fill="#475b45"/><rect x="506.7" y="0" width="1.5" height="109.0" fill="#475b45"/><rect x="534.3" y="0" width="1.5" height="109.0" fill="#475b45"/><rect x="276.3" y="149.0" width="1.5" height="106.4" fill="#475b45"/><rect x="287.9" y="137.0" width="1.5" height="118.4" fill="#475b45"/><rect x="298.3" y="137.0" width="1.5" height="118.4" fill="#475b45"/><rect x="324.7" y="133.0" width="1.5" height="122.4" fill="#475b45"/><rect x="342.3" y="141.0" width="1.5" height="114.4" fill="#475b45"/><rect x="352.3" y="147.0" width="1.5" height="108.4" fill="#475b45"/><rect x="364.3" y="135.0" width="1.5" height="120.4" fill="#475b45"/><rect x="499.3" y="141.0" width="1.5" height="114.4" fill="#475b45"/><rect x="506.7" y="149.0" width="1.5" height="106.4" fill="#475b45"/><rect x="534.3" y="149.0" width="1.5" height="106.4" fill="#475b45"/><rect x="529.3" y="159.0" width="1.5" height="96.4" fill="#475b45"/><rect x="0" y="0" width="2.4" height="255.4" fill="#a4463b"/><rect x="2.2" y="0" width="4.6" height="255.4" fill="#c9d88e"/><rect x="817.2" y="0" width="3.6" height="255.4" fill="#8fe07f"/><rect x="0" y="254.4" width="821" height="1" fill="#b9bfa6"/></svg>
<span class="t" style="left:70.40px;top:574.24px;font-size:16.6px;line-height:16.6px;font-weight:normal;color:#b9b9b9;transform:scaleX(0.9979);-webkit-text-stroke:.3px #b9b9b9;">0:00</span>
<span class="t" style="left:171.00px;top:574.24px;font-size:16.6px;line-height:16.6px;font-weight:normal;color:#b9b9b9;transform:scaleX(1.0166);-webkit-text-stroke:.3px #b9b9b9;">0:04</span>
<span class="t" style="left:288.40px;top:574.24px;font-size:16.6px;line-height:16.6px;font-weight:normal;color:#b9b9b9;transform:scaleX(0.9854);-webkit-text-stroke:.3px #b9b9b9;">0:09</span>
<span class="t" style="left:404.30px;top:574.24px;font-size:16.6px;line-height:16.6px;font-weight:normal;color:#b9b9b9;transform:scaleX(1.0072);-webkit-text-stroke:.3px #b9b9b9;">0:13</span>
<span class="t" style="left:521.50px;top:574.24px;font-size:16.6px;line-height:16.6px;font-weight:normal;color:#b9b9b9;transform:scaleX(1.0135);-webkit-text-stroke:.3px #b9b9b9;">0:18</span>
<span class="t" style="left:638.00px;top:574.24px;font-size:16.6px;line-height:16.6px;font-weight:normal;color:#b9b9b9;transform:scaleX(1.0135);-webkit-text-stroke:.3px #b9b9b9;">0:22</span>
<span class="t" style="left:754.40px;top:574.24px;font-size:16.6px;line-height:16.6px;font-weight:normal;color:#b9b9b9;transform:scaleX(0.9979);-webkit-text-stroke:.3px #b9b9b9;">0:27</span>
<span class="t" style="left:855.60px;top:574.24px;font-size:16.6px;line-height:16.6px;font-weight:normal;color:#b9b9b9;transform:scaleX(0.9917);-webkit-text-stroke:.3px #b9b9b9;">0:32</span>
<svg style="left:64px;top:595px" width="724" height="28" viewBox="0 0 724 28"><path d="M2 13.5 L13 2.5 L708 2.5 L720 13.5 L708 24.5 L13 24.5 Z" fill="#0f0f10" stroke="#3c3e40" stroke-width="1.4"/><path d="M15 6 L15 21 L6.4 13.5 Z" fill="#9b9b9b"/><path d="M707 6 L707 21 L715.6 13.5 Z" fill="#8a8a8a"/><rect x="21" y="6" width="680" height="15" rx="7.5" fill="#aaaaaa"/></svg>
<svg style="left:793px;top:600px" width="16" height="18" viewBox="0 0 16 18"><path d="M4 8 V5.6 A4 4 0 0 1 12 5.6 V8" fill="none" stroke="#f4f4f4" stroke-width="2"/><rect x="1" y="7.4" width="14" height="9.8" rx="1.2" fill="#f4f4f4"/><rect x="7.2" y="10.4" width="1.7" height="3.8" fill="#26282a"/></svg>
<svg style="left:818px;top:600px" width="18" height="18" viewBox="0 0 18 18"><circle cx="8" cy="8.2" r="6.4" fill="none" stroke="#f4f4f4" stroke-width="1.7"/><path d="M12.8 13 L16.6 16.8" stroke="#f4f4f4" stroke-width="1.9"/><path d="M4.4 8.2H11.6M8 4.6V11.8" stroke="#f4f4f4" stroke-width="1.9"/></svg>
<svg style="left:845px;top:600px" width="18" height="18" viewBox="0 0 18 18"><circle cx="8" cy="8.2" r="6.4" fill="none" stroke="#5a5c5e" stroke-width="1.7"/><path d="M12.8 13 L16.6 16.8" stroke="#5a5c5e" stroke-width="1.9"/><path d="M4.6 8.2H11.4" stroke="#5a5c5e" stroke-width="1.9"/></svg>
<svg style="left:872px;top:600px" width="18" height="18" viewBox="0 0 18 18"><circle cx="8" cy="8.2" r="6.4" fill="none" stroke="#5a5c5e" stroke-width="1.7"/><path d="M12.8 13 L16.6 16.8" stroke="#5a5c5e" stroke-width="1.9"/><rect x="5.3" y="5.5" width="5.4" height="5.4" fill="none" stroke="#5a5c5e" stroke-width="1.6"/></svg>
<div class="strip" style="left:921px;top:287px;width:30.6px;height:351.5px;"></div>
<svg style="left:928.5px;top:453.5px" width="14" height="17" viewBox="0 0 15 18"><rect x="1.4" y="1.2" width="11.6" height="14.7" fill="none" stroke="#111" stroke-width="2.2"/><path d="M7.2 3.9 L11 8.6 L8.3 8.6 L8.3 9.6 L11 9.6 L7.2 14.3 L3.4 9.6 L6.1 9.6 L6.1 8.6 L3.4 8.6 Z" fill="#111"/></svg>
<div class="strip" style="left:921px;top:649px;width:30.6px;height:338px;"></div>
<svg style="left:928.5px;top:808.5px" width="14" height="17" viewBox="0 0 15 18"><rect x="1.4" y="1.2" width="11.6" height="14.7" fill="none" stroke="#111" stroke-width="2.2"/><path d="M7.2 3.9 L11 8.6 L8.3 8.6 L8.3 9.6 L11 9.6 L7.2 14.3 L3.4 9.6 L6.1 9.6 L6.1 8.6 L3.4 8.6 Z" fill="#111"/></svg>
<div class="strip" style="left:921px;top:996.5px;width:30.6px;height:338.5px;"></div>
<svg style="left:928.5px;top:1156.5px" width="14" height="17" viewBox="0 0 15 18"><rect x="1.4" y="1.2" width="11.6" height="14.7" fill="none" stroke="#111" stroke-width="2.2"/><path d="M7.2 3.9 L11 8.6 L8.3 8.6 L8.3 9.6 L11 9.6 L7.2 14.3 L3.4 9.6 L6.1 9.6 L6.1 8.6 L3.4 8.6 Z" fill="#111"/></svg>
<div style="left:44px;top:648px;width:871.6px;height:312px;overflow:hidden;">
<div class="slot" style="left:1px;top:0.5px;width:327px;height:308.5px;background:radial-gradient(ellipse 62% 75% at 51% 50%,#82b2f2 0%,#6b9de3 35%,#507fcb 70%,#3f6bb3 100%);border:1.5px solid #2d4f86;"></div>
<div class="lb" style="left:7px;top:5.6px;width:29.6px;height:20.8px;"></div>
<svg style="left:13.0px;top:7.6px" width="18" height="17" viewBox="0 0 18 17"><g transform="translate(-1.1 0) rotate(45 9 8.5)" fill="#0b0c0e"><rect x="6.7" y="-2.6" width="4.6" height="3.2" rx=".8"/><rect x="6.7" y="1.5" width="4.6" height="11.4"/><path d="M6.7 13.7 H11.3 L9 18.4 Z"/></g></svg>
<svg style="left:99.0px;top:99.6px" width="18" height="17" viewBox="0 0 18 17"><path d="M1 5.6 H4.6 L9.6 1 V16 L4.6 11.4 H1 Z" fill="#0b0c0e"/><path d="M11.6 5.6 A3.6 3.6 0 0 1 11.6 11.4" fill="none" stroke="#0b0c0e" stroke-width="1.7"/><path d="M12.4 2.2 A7.2 7.2 0 0 1 12.4 14.8" fill="none" stroke="#0b0c0e" stroke-width="1.7"/></svg>
<span class="t" style="left:124.60px;top:97.59px;font-size:23.4px;line-height:23.4px;font-weight:bold;color:#5b9b82;transform:scaleX(0.9717);">Test song</span>
<div class="df" style="left:5px;top:186.4px;width:242px;height:34.2px;"></div>
<span class="t" style="left:9.60px;top:194.97px;font-size:22px;line-height:22px;font-weight:normal;color:#f2f2f2;transform:scaleX(0.9987);-webkit-text-stroke:.3px #f2f2f2;">testsignal.wav</span>
<div class="lb" style="left:253.1px;top:188.2px;width:30.6px;height:30px;border:1.5px solid #2b4a7c;"></div>
<svg style="left:259.2px;top:193.2px" width="19" height="19" viewBox="0 0 19 19"><circle cx="7.4" cy="7.4" r="5.4" fill="none" stroke="#0b0c0e" stroke-width="1.9"/><path d="M11.3 11.3 L16.8 16.8" stroke="#0b0c0e" stroke-width="2.2"/></svg>
<div class="lb" style="left:292.1px;top:188.2px;width:30px;height:30px;border:1.5px solid #2b4a7c;"></div>
<svg style="left:298.2px;top:192.8px" width="18" height="20" viewBox="0 0 18 20"><path d="M6 3.4 V1.6 H12 V3.4" fill="none" stroke="#0b0c0e" stroke-width="1.7"/><rect x=".8" y="3.4" width="16.4" height="2.4" rx=".8" fill="#0b0c0e"/><path d="M2.6 6.4 H15.4 L14.6 18.2 Q14.5 19.2 13.5 19.2 H4.5 Q3.5 19.2 3.4 18.2 Z" fill="#0b0c0e"/><path d="M6 8.4V16.8M9 8.4V16.8M12 8.4V16.8" stroke="#b6babe" stroke-width="1.3"/></svg>
<span class="t" style="left:7.43px;top:235.74px;font-size:21.8px;line-height:21.8px;font-weight:normal;color:#08143e;transform:scaleX(0.9700);-webkit-text-stroke:.3px #08143e;">Gain</span>
<div class="df" style="left:60px;top:228px;width:86.6px;height:34.4px;"></div>
<div style="left:102.6px;top:230px;width:1px;height:30.4px;background:#5a5c5e;"></div>
<span class="t" style="left:68.00px;top:235.74px;font-size:21.8px;line-height:21.8px;font-weight:normal;color:#fafafa;transform:scaleX(0.9437);-webkit-text-stroke:.3px #fafafa;">0.00 dB</span>
<div class="lb" style="left:150.4px;top:228px;width:82.6px;height:33.4px;"></div>
<span class="t" style="left:176.00px;top:235.34px;font-size:21.8px;line-height:21.8px;font-weight:normal;color:#0c0d0f;transform:scaleX(0.9492);-webkit-text-stroke:.3px #0c0d0f;">Set</span>
<div class="lb" style="left:239.1px;top:228px;width:82.7px;height:33.4px;"></div>
<span class="t" style="left:261.60px;top:235.34px;font-size:21.8px;line-height:21.8px;font-weight:normal;color:#0c0d0f;transform:scaleX(0.8977);-webkit-text-stroke:.3px #0c0d0f;">ALC</span>
<span class="t" style="left:8.40px;top:276.14px;font-size:21.8px;line-height:21.8px;font-weight:normal;color:#3b67a8;transform:scaleX(1.0005);-webkit-text-stroke:.3px #3b67a8;">Start</span>
<div style="left:60px;top:269px;width:86.6px;height:33px;background:rgba(70,110,175,.55);"></div>
<span class="t" style="left:75.00px;top:276.14px;font-size:21.8px;line-height:21.8px;font-weight:normal;color:#7da3dc;transform:scaleX(0.9359);-webkit-text-stroke:.3px #7da3dc;">0:00.0</span>
<div style="left:150.4px;top:269px;width:82.6px;height:32.6px;background:rgba(60,100,170,.75);"></div>
<span class="t" style="left:158.97px;top:276.14px;font-size:21.8px;line-height:21.8px;font-weight:normal;color:#7ea6e0;transform:scaleX(1.0268);-webkit-text-stroke:.3px #7ea6e0;">Detect</span>
<div class="lb" style="left:239.1px;top:268.3px;width:82.7px;height:33.3px;"></div>
<span class="t" style="left:257.00px;top:276.14px;font-size:21.8px;line-height:21.8px;font-weight:normal;color:#0c0d0f;transform:scaleX(0.9473);-webkit-text-stroke:.3px #0c0d0f;">Sync</span>
<div class="slot" style="left:336px;top:0.5px;width:327px;height:308.5px;"></div>
<div class="lb" style="left:342px;top:5.6px;width:29.6px;height:20.8px;"></div>
<svg style="left:348.0px;top:7.6px" width="18" height="17" viewBox="0 0 18 17"><g transform="translate(-1.1 0) rotate(45 9 8.5)" fill="#0b0c0e"><rect x="6.7" y="-2.6" width="4.6" height="3.2" rx=".8"/><rect x="6.7" y="1.5" width="4.6" height="11.4"/><path d="M6.7 13.7 H11.3 L9 18.4 Z"/></g></svg>
<svg style="left:427.5px;top:99.6px" width="18" height="17" viewBox="0 0 18 17"><path d="M1 5.6 H4.6 L9.6 1 V16 L4.6 11.4 H1 Z" fill="#0b0c0e"/><path d="M11.6 5.6 A3.6 3.6 0 0 1 11.6 11.4" fill="none" stroke="#0b0c0e" stroke-width="1.7"/><path d="M12.4 2.2 A7.2 7.2 0 0 1 12.4 14.8" fill="none" stroke="#0b0c0e" stroke-width="1.7"/></svg>
<span class="t" style="left:453.00px;top:97.59px;font-size:23.4px;line-height:23.4px;font-weight:bold;color:#0c0d0f;transform:scaleX(0.9146);">Super song</span>
<div class="df" style="left:340px;top:186.4px;width:242px;height:34.2px;"></div>
<span class="t" style="left:343.02px;top:194.97px;font-size:22px;line-height:22px;font-weight:normal;color:#f2f2f2;transform:scaleX(0.9787);-webkit-text-stroke:.3px #f2f2f2;">loop.wav</span>
<div class="lb" style="left:588.1px;top:188.2px;width:30.6px;height:30px;border:1.5px solid #4a4e52;"></div>
<svg style="left:594.2px;top:193.2px" width="19" height="19" viewBox="0 0 19 19"><circle cx="7.4" cy="7.4" r="5.4" fill="none" stroke="#0b0c0e" stroke-width="1.9"/><path d="M11.3 11.3 L16.8 16.8" stroke="#0b0c0e" stroke-width="2.2"/></svg>
<div class="lb" style="left:627.1px;top:188.2px;width:30px;height:30px;border:1.5px solid #4a4e52;"></div>
<svg style="left:633.2px;top:192.8px" width="18" height="20" viewBox="0 0 18 20"><path d="M6 3.4 V1.6 H12 V3.4" fill="none" stroke="#0b0c0e" stroke-width="1.7"/><rect x=".8" y="3.4" width="16.4" height="2.4" rx=".8" fill="#0b0c0e"/><path d="M2.6 6.4 H15.4 L14.6 18.2 Q14.5 19.2 13.5 19.2 H4.5 Q3.5 19.2 3.4 18.2 Z" fill="#0b0c0e"/><path d="M6 8.4V16.8M9 8.4V16.8M12 8.4V16.8" stroke="#b6babe" stroke-width="1.3"/></svg>
<span class="t" style="left:342.43px;top:235.74px;font-size:21.8px;line-height:21.8px;font-weight:normal;color:#101214;transform:scaleX(0.9700);-webkit-text-stroke:.3px #101214;">Gain</span>
<div class="df" style="left:395px;top:228px;width:86.6px;height:34.4px;"></div>
<div style="left:437.6px;top:230px;width:1px;height:30.4px;background:#5a5c5e;"></div>
<span class="t" style="left:403.00px;top:235.74px;font-size:21.8px;line-height:21.8px;font-weight:normal;color:#fafafa;transform:scaleX(0.9437);-webkit-text-stroke:.3px #fafafa;">0.00 dB</span>
<div class="lb" style="left:485.4px;top:228px;width:82.6px;height:33.4px;"></div>
<span class="t" style="left:511.00px;top:235.34px;font-size:21.8px;line-height:21.8px;font-weight:normal;color:#0c0d0f;transform:scaleX(0.9492);-webkit-text-stroke:.3px #0c0d0f;">Set</span>
<div class="lb" style="left:574.1px;top:228px;width:82.7px;height:33.4px;"></div>
<span class="t" style="left:596.60px;top:235.34px;font-size:21.8px;line-height:21.8px;font-weight:normal;color:#0c0d0f;transform:scaleX(0.8977);-webkit-text-stroke:.3px #0c0d0f;">ALC</span>
<span class="t" style="left:343.40px;top:276.14px;font-size:21.8px;line-height:21.8px;font-weight:normal;color:#868b8f;transform:scaleX(1.0005);-webkit-text-stroke:.3px #868b8f;">Start</span>
<div style="left:395px;top:269px;width:86.6px;height:33px;background:rgba(150,154,158,.75);"></div>
<span class="t" style="left:410.00px;top:276.14px;font-size:21.8px;line-height:21.8px;font-weight:normal;color:#c3c6c9;transform:scaleX(0.9359);-webkit-text-stroke:.3px #c3c6c9;">0:00.0</span>
<div style="left:485.4px;top:269px;width:82.6px;height:32.6px;background:rgba(138,142,146,.9);"></div>
<span class="t" style="left:493.97px;top:276.14px;font-size:21.8px;line-height:21.8px;font-weight:normal;color:#b7babd;transform:scaleX(1.0268);-webkit-text-stroke:.3px #b7babd;">Detect</span>
<div class="lb" style="left:574.1px;top:268.3px;width:82.7px;height:33.3px;"></div>
<span class="t" style="left:592.00px;top:276.14px;font-size:21.8px;line-height:21.8px;font-weight:normal;color:#0c0d0f;transform:scaleX(0.9473);-webkit-text-stroke:.3px #0c0d0f;">Sync</span>
<div class="slot" style="left:671.6px;top:0.5px;width:327px;height:308.5px;"></div>
<div class="lb" style="left:677.6px;top:5.6px;width:29.6px;height:20.8px;"></div>
<svg style="left:683.6px;top:7.6px" width="18" height="17" viewBox="0 0 18 17"><g transform="translate(-1.1 0) rotate(45 9 8.5)" fill="#0b0c0e"><rect x="6.7" y="-2.6" width="4.6" height="3.2" rx=".8"/><rect x="6.7" y="1.5" width="4.6" height="11.4"/><path d="M6.7 13.7 H11.3 L9 18.4 Z"/></g></svg>
<svg style="left:792.6px;top:99.6px" width="18" height="17" viewBox="0 0 18 17"><path d="M1 5.6 H4.6 L9.6 1 V16 L4.6 11.4 H1 Z" fill="#0b0c0e"/><path d="M11.6 5.6 A3.6 3.6 0 0 1 11.6 11.4" fill="none" stroke="#0b0c0e" stroke-width="1.7"/><path d="M12.4 2.2 A7.2 7.2 0 0 1 12.4 14.8" fill="none" stroke="#0b0c0e" stroke-width="1.7"/></svg>
<span class="t" style="left:817.50px;top:97.59px;font-size:23.4px;line-height:23.4px;font-weight:bold;color:#0c0d0f;transform:scaleX(1.0035);">File 3</span>
<div class="df" style="left:675.6px;top:186.4px;width:242px;height:34.2px;"></div>
<span class="t" style="left:678.03px;top:235.74px;font-size:21.8px;line-height:21.8px;font-weight:normal;color:#101214;transform:scaleX(0.9700);-webkit-text-stroke:.3px #101214;">Gain</span>
<div class="df" style="left:730.6px;top:228px;width:86.6px;height:34.4px;"></div>
<div style="left:773.2px;top:230px;width:1px;height:30.4px;background:#5a5c5e;"></div>
<span class="t" style="left:738.60px;top:235.74px;font-size:21.8px;line-height:21.8px;font-weight:normal;color:#fafafa;transform:scaleX(0.9437);-webkit-text-stroke:.3px #fafafa;">0.00 dB</span>
<div class="lb" style="left:821px;top:228px;width:82.6px;height:33.4px;"></div>
<span class="t" style="left:846.60px;top:235.34px;font-size:21.8px;line-height:21.8px;font-weight:normal;color:#0c0d0f;transform:scaleX(0.9492);-webkit-text-stroke:.3px #0c0d0f;">Set</span>
<div class="lb" style="left:909.7px;top:228px;width:82.7px;height:33.4px;"></div>
<span class="t" style="left:932.20px;top:235.34px;font-size:21.8px;line-height:21.8px;font-weight:normal;color:#0c0d0f;transform:scaleX(0.8977);-webkit-text-stroke:.3px #0c0d0f;">ALC</span>
<span class="t" style="left:679.00px;top:276.14px;font-size:21.8px;line-height:21.8px;font-weight:normal;color:#868b8f;transform:scaleX(1.0005);-webkit-text-stroke:.3px #868b8f;">Start</span>
<div style="left:730.6px;top:269px;width:86.6px;height:33px;background:rgba(150,154,158,.75);"></div>
<span class="t" style="left:745.60px;top:276.14px;font-size:21.8px;line-height:21.8px;font-weight:normal;color:#c3c6c9;transform:scaleX(0.9359);-webkit-text-stroke:.3px #c3c6c9;">0:00.0</span>
<div style="left:821px;top:269px;width:82.6px;height:32.6px;background:rgba(138,142,146,.9);"></div>
<span class="t" style="left:829.57px;top:276.14px;font-size:21.8px;line-height:21.8px;font-weight:normal;color:#b7babd;transform:scaleX(1.0268);-webkit-text-stroke:.3px #b7babd;">Detect</span>
<div class="lb" style="left:909.7px;top:268.3px;width:82.7px;height:33.3px;"></div>
<span class="t" style="left:927.60px;top:276.14px;font-size:21.8px;line-height:21.8px;font-weight:normal;color:#0c0d0f;transform:scaleX(0.9473);-webkit-text-stroke:.3px #0c0d0f;">Sync</span>
</div>
<svg style="left:41px;top:962px" width="878" height="28" viewBox="0 0 878 28"><path d="M2 13.8 L13.5 2.2 L863 2.2 L874.5 13.8 L863 25.4 L13.5 25.4 Z" fill="#d9d9d8" stroke="#343638" stroke-width="1.5"/><path d="M15.4 6.4 L15.4 21.2 L6.6 13.8 Z" fill="#2a2c2e"/><path d="M861.6 6.4 L861.6 21.2 L870.4 13.8 Z" fill="#2a2c2e"/><rect x="21" y="6.8" width="544" height="14" rx="7" fill="#111214"/></svg>
<div style="left:44px;top:995px;width:871.6px;height:313px;overflow:hidden;">
<div class="slot" style="left:1px;top:0.9px;width:333px;height:309.4px;"></div>
<div class="lb" style="left:7px;top:6px;width:29.8px;height:21px;"></div>
<svg style="left:13.0px;top:8.1px" width="18" height="17" viewBox="0 0 18 17"><g transform="translate(-1.1 0) rotate(45 9 8.5)" fill="#0b0c0e"><rect x="6.7" y="-2.6" width="4.6" height="3.2" rx=".8"/><rect x="6.7" y="1.5" width="4.6" height="11.4"/><path d="M6.7 13.7 H11.3 L9 18.4 Z"/></g></svg>
<svg style="left:108.6px;top:121.0px" width="18" height="17" viewBox="0 0 18 17"><path d="M1 5.6 H4.6 L9.6 1 V16 L4.6 11.4 H1 Z" fill="#0b0c0e"/><path d="M11.6 5.6 A3.6 3.6 0 0 1 11.6 11.4" fill="none" stroke="#0b0c0e" stroke-width="1.7"/><path d="M12.4 2.2 A7.2 7.2 0 0 1 12.4 14.8" fill="none" stroke="#0b0c0e" stroke-width="1.7"/></svg>
<span class="t" style="left:134.80px;top:118.99px;font-size:23.4px;line-height:23.4px;font-weight:bold;color:#0c0d0f;transform:scaleX(0.8978);">Source 1</span>
<span class="t" style="left:7.43px;top:237.14px;font-size:21.8px;line-height:21.8px;font-weight:normal;color:#101214;transform:scaleX(0.9700);-webkit-text-stroke:.3px #101214;">Gain</span>
<div class="df" style="left:66.6px;top:229.4px;width:86.8px;height:34px;"></div>
<div style="left:109.6px;top:231.4px;width:1px;height:30px;background:#5a5c5e;"></div>
<span class="t" style="left:74.40px;top:237.14px;font-size:21.8px;line-height:21.8px;font-weight:normal;color:#fafafa;transform:scaleX(0.9517);-webkit-text-stroke:.3px #fafafa;">0.00 dB</span>
<div class="lb" style="left:157.5px;top:229.3px;width:82.6px;height:33.3px;"></div>
<span class="t" style="left:183.00px;top:236.74px;font-size:21.8px;line-height:21.8px;font-weight:normal;color:#0c0d0f;transform:scaleX(0.9369);-webkit-text-stroke:.3px #0c0d0f;">Set</span>
<div class="lb" style="left:245.9px;top:229.3px;width:82.6px;height:33.3px;"></div>
<span class="t" style="left:268.40px;top:236.74px;font-size:21.8px;line-height:21.8px;font-weight:normal;color:#0c0d0f;transform:scaleX(0.9025);-webkit-text-stroke:.3px #0c0d0f;">ALC</span>
<span class="t" style="left:8.05px;top:278.14px;font-size:21.8px;line-height:21.8px;font-weight:normal;color:#101214;transform:scaleX(0.9484);-webkit-text-stroke:.3px #101214;">Delay</span>
<div class="df" style="left:66.6px;top:270px;width:86.8px;height:34.4px;"></div>
<div style="left:68.6px;top:272px;width:1px;height:30.4px;background:#5a5c5e;"></div>
<span class="t" style="left:87.00px;top:278.14px;font-size:21.8px;line-height:21.8px;font-weight:normal;color:#fafafa;transform:scaleX(0.9718);-webkit-text-stroke:.3px #fafafa;">0 ms</span>
<div class="lb" style="left:157.5px;top:270.5px;width:171px;height:33.2px;"></div>
<span class="t" style="left:209.98px;top:277.54px;font-size:21.8px;line-height:21.8px;font-weight:normal;color:#0c0d0f;transform:scaleX(1.0171);-webkit-text-stroke:.3px #0c0d0f;">Detect</span>
<div class="slot" style="left:343px;top:0.9px;width:333px;height:309.4px;"></div>
<div class="lb" style="left:349px;top:6px;width:29.8px;height:21px;"></div>
<svg style="left:355.0px;top:8.1px" width="18" height="17" viewBox="0 0 18 17"><g transform="translate(-1.1 0) rotate(45 9 8.5)" fill="#0b0c0e"><rect x="6.7" y="-2.6" width="4.6" height="3.2" rx=".8"/><rect x="6.7" y="1.5" width="4.6" height="11.4"/><path d="M6.7 13.7 H11.3 L9 18.4 Z"/></g></svg>
<svg style="left:450.2px;top:121.0px" width="18" height="17" viewBox="0 0 18 17"><path d="M1 5.6 H4.6 L9.6 1 V16 L4.6 11.4 H1 Z" fill="#0b0c0e"/><path d="M11.6 5.6 A3.6 3.6 0 0 1 11.6 11.4" fill="none" stroke="#0b0c0e" stroke-width="1.7"/><path d="M12.4 2.2 A7.2 7.2 0 0 1 12.4 14.8" fill="none" stroke="#0b0c0e" stroke-width="1.7"/></svg>
<span class="t" style="left:476.40px;top:118.99px;font-size:23.4px;line-height:23.4px;font-weight:bold;color:#0c0d0f;transform:scaleX(0.9130);">Source 2</span>
<span class="t" style="left:349.43px;top:237.14px;font-size:21.8px;line-height:21.8px;font-weight:normal;color:#101214;transform:scaleX(0.9700);-webkit-text-stroke:.3px #101214;">Gain</span>
<div class="df" style="left:408.6px;top:229.4px;width:86.8px;height:34px;"></div>
<div style="left:451.6px;top:231.4px;width:1px;height:30px;background:#5a5c5e;"></div>
<span class="t" style="left:416.40px;top:237.14px;font-size:21.8px;line-height:21.8px;font-weight:normal;color:#fafafa;transform:scaleX(0.9517);-webkit-text-stroke:.3px #fafafa;">0.00 dB</span>
<div class="lb" style="left:499.5px;top:229.3px;width:82.6px;height:33.3px;"></div>
<span class="t" style="left:525.00px;top:236.74px;font-size:21.8px;line-height:21.8px;font-weight:normal;color:#0c0d0f;transform:scaleX(0.9369);-webkit-text-stroke:.3px #0c0d0f;">Set</span>
<div class="lb" style="left:587.9px;top:229.3px;width:82.6px;height:33.3px;"></div>
<span class="t" style="left:610.40px;top:236.74px;font-size:21.8px;line-height:21.8px;font-weight:normal;color:#0c0d0f;transform:scaleX(0.9025);-webkit-text-stroke:.3px #0c0d0f;">ALC</span>
<span class="t" style="left:350.05px;top:278.14px;font-size:21.8px;line-height:21.8px;font-weight:normal;color:#101214;transform:scaleX(0.9484);-webkit-text-stroke:.3px #101214;">Delay</span>
<div class="df" style="left:408.6px;top:270px;width:86.8px;height:34.4px;"></div>
<div style="left:410.6px;top:272px;width:1px;height:30.4px;background:#5a5c5e;"></div>
<span class="t" style="left:429.00px;top:278.14px;font-size:21.8px;line-height:21.8px;font-weight:normal;color:#fafafa;transform:scaleX(0.9718);-webkit-text-stroke:.3px #fafafa;">0 ms</span>
<div class="lb" style="left:499.5px;top:270.5px;width:171px;height:33.2px;"></div>
<span class="t" style="left:551.98px;top:277.54px;font-size:21.8px;line-height:21.8px;font-weight:normal;color:#0c0d0f;transform:scaleX(1.0171);-webkit-text-stroke:.3px #0c0d0f;">Detect</span>
<div class="slot" style="left:685px;top:0.9px;width:333px;height:309.4px;"></div>
<div class="lb" style="left:691px;top:6px;width:29.8px;height:21px;"></div>
<svg style="left:697.0px;top:8.1px" width="18" height="17" viewBox="0 0 18 17"><g transform="translate(-1.1 0) rotate(45 9 8.5)" fill="#0b0c0e"><rect x="6.7" y="-2.6" width="4.6" height="3.2" rx=".8"/><rect x="6.7" y="1.5" width="4.6" height="11.4"/><path d="M6.7 13.7 H11.3 L9 18.4 Z"/></g></svg>
<svg style="left:792.2px;top:121.0px" width="18" height="17" viewBox="0 0 18 17"><path d="M1 5.6 H4.6 L9.6 1 V16 L4.6 11.4 H1 Z" fill="#0b0c0e"/><path d="M11.6 5.6 A3.6 3.6 0 0 1 11.6 11.4" fill="none" stroke="#0b0c0e" stroke-width="1.7"/><path d="M12.4 2.2 A7.2 7.2 0 0 1 12.4 14.8" fill="none" stroke="#0b0c0e" stroke-width="1.7"/></svg>
<span class="t" style="left:818.40px;top:118.99px;font-size:23.4px;line-height:23.4px;font-weight:bold;color:#0c0d0f;transform:scaleX(0.9130);">Source 3</span>
<span class="t" style="left:691.43px;top:237.14px;font-size:21.8px;line-height:21.8px;font-weight:normal;color:#101214;transform:scaleX(0.9700);-webkit-text-stroke:.3px #101214;">Gain</span>
<div class="df" style="left:750.6px;top:229.4px;width:86.8px;height:34px;"></div>
<div style="left:793.6px;top:231.4px;width:1px;height:30px;background:#5a5c5e;"></div>
<span class="t" style="left:758.40px;top:237.14px;font-size:21.8px;line-height:21.8px;font-weight:normal;color:#fafafa;transform:scaleX(0.9517);-webkit-text-stroke:.3px #fafafa;">0.00 dB</span>
<div class="lb" style="left:841.5px;top:229.3px;width:82.6px;height:33.3px;"></div>
<span class="t" style="left:867.00px;top:236.74px;font-size:21.8px;line-height:21.8px;font-weight:normal;color:#0c0d0f;transform:scaleX(0.9369);-webkit-text-stroke:.3px #0c0d0f;">Set</span>
<div class="lb" style="left:929.9px;top:229.3px;width:82.6px;height:33.3px;"></div>
<span class="t" style="left:952.40px;top:236.74px;font-size:21.8px;line-height:21.8px;font-weight:normal;color:#0c0d0f;transform:scaleX(0.9025);-webkit-text-stroke:.3px #0c0d0f;">ALC</span>
<span class="t" style="left:692.05px;top:278.14px;font-size:21.8px;line-height:21.8px;font-weight:normal;color:#101214;transform:scaleX(0.9484);-webkit-text-stroke:.3px #101214;">Delay</span>
<div class="df" style="left:750.6px;top:270px;width:86.8px;height:34.4px;"></div>
<div style="left:752.6px;top:272px;width:1px;height:30.4px;background:#5a5c5e;"></div>
<span class="t" style="left:771.00px;top:278.14px;font-size:21.8px;line-height:21.8px;font-weight:normal;color:#fafafa;transform:scaleX(0.9718);-webkit-text-stroke:.3px #fafafa;">0 ms</span>
<div class="lb" style="left:841.5px;top:270.5px;width:171px;height:33.2px;"></div>
<span class="t" style="left:893.98px;top:277.54px;font-size:21.8px;line-height:21.8px;font-weight:normal;color:#0c0d0f;transform:scaleX(1.0171);-webkit-text-stroke:.3px #0c0d0f;">Detect</span>
</div>
<svg style="left:41px;top:1310.6px" width="878" height="28" viewBox="0 0 878 28"><path d="M2 13.8 L13.5 2.2 L863 2.2 L874.5 13.8 L863 25.4 L13.5 25.4 Z" fill="#d9d9d8" stroke="#343638" stroke-width="1.5"/><path d="M15.4 6.4 L15.4 21.2 L6.6 13.8 Z" fill="#2a2c2e"/><path d="M861.6 6.4 L861.6 21.2 L870.4 13.8 Z" fill="#2a2c2e"/><rect x="21" y="6.8" width="534" height="14" rx="7" fill="#111214"/></svg>
<div style="left:1000.2px;top:141px;width:424.7px;height:1109.8px;background:#45453f;border-radius:11px;"></div>
<div style="left:1001.3px;top:142.1px;width:422.4px;height:1107.4px;background:#b6b6b4;border-radius:10px;"></div>
<div style="left:1002.8px;top:143.6px;width:419.3px;height:1104.2px;background:linear-gradient(180deg,#303437 0%,#2e3235 30%,#26292b 70%,#1d1e20 100%);border-radius:8.5px;box-shadow:inset 0 0 7px 2px rgba(0,0,0,.6);"></div>
<div style="left:1023px;top:163.6px;width:31.4px;height:942.8px;background:linear-gradient(180deg,#b7bfc3 0%,#adb4b7 45%,#a3a6aa 100%);border:1px solid #bdc4c7;border-right-color:#b3babd;"></div>
<div style="left:1023px;top:1107.4px;width:31.4px;height:1.4px;background:#4c4f52;"></div>
<svg style="left:1031px;top:625px" width="16" height="17" viewBox="0 0 16 17"><g fill="#0b0c0e"><rect x=".1" y="15.4" width="15" height="1.4"/><rect x="1.1" y="6.3" width="3.8" height="9.4"/><rect x="6.1" y=".9" width="4.5" height="14.8"/><rect x="11.3" y="11.3" width="3.3" height="4.4"/></g></svg>
<div style="left:1064.4px;top:163.2px;width:40.8px;height:81px;background:linear-gradient(180deg,#c0c5c8 0%,#b5b9bc 50%,#a6a9ac 100%);border:1px solid #606468;"></div>
<div style="left:1064.4px;top:245.8px;width:40.8px;height:1.2px;background:#505356;"></div>
<div style="left:1064.4px;top:255.8px;width:40.8px;height:69.2px;background:linear-gradient(180deg,#c0c5c8 0%,#b5b9bc 50%,#a6a9ac 100%);border:1px solid #606468;"></div>
<div style="left:1064.4px;top:326.6px;width:40.8px;height:1.2px;background:#505356;"></div>
<span class="t" style="left:1075.97px;top:234.15px;font-size:22px;line-height:22px;font-weight:normal;color:#0c0d0f;transform:rotate(-90deg) scaleX(0.9531);-webkit-text-stroke:.3px #0c0d0f;">Stereo</span>
<span class="t" style="left:1075.97px;top:315.96px;font-size:22px;line-height:22px;font-weight:normal;color:#0c0d0f;transform:rotate(-90deg) scaleX(0.9641);-webkit-text-stroke:.3px #0c0d0f;">Crest</span>
<span class="t" style="left:1194.40px;top:165.27px;font-size:20px;line-height:20px;font-weight:bold;color:#fafafa;transform:scaleX(0.9663);">Out</span>
<span class="t" style="left:1346.65px;top:165.27px;font-size:20px;line-height:20px;font-weight:bold;color:#fafafa;transform:scaleX(0.9517);">LU</span>
<div style="left:1172px;top:192px;width:38px;height:977.4px;background:linear-gradient(180deg,#45484a 0%,#424547 40%,#3a3c3e 80%,#333537 100%);"></div>
<div style="left:1213px;top:192px;width:38.4px;height:977.4px;background:linear-gradient(180deg,#45484a 0%,#424547 40%,#3a3c3e 80%,#333537 100%);"></div>
<div style="left:1320.4px;top:192px;width:78.6px;height:976.4px;background:linear-gradient(180deg,#45484a 0%,#424547 40%,#3a3c3e 80%,#333537 100%);"></div>
<div style="left:1320.4px;top:1168.4px;width:78.6px;height:1.2px;background:#9a9c9e;"></div>
<span class="t" style="left:1156.90px;top:195.47px;font-size:17.4px;line-height:17.4px;font-weight:normal;color:#f0f0f0;transform:scaleX(0.9444);-webkit-text-stroke:.3px #f0f0f0;">0</span>
<span class="t" style="left:1141.00px;top:307.12px;font-size:17.4px;line-height:17.4px;font-weight:normal;color:#f0f0f0;transform:scaleX(0.9974);-webkit-text-stroke:.3px #f0f0f0;">-10</span>
<span class="t" style="left:1141.00px;top:429.37px;font-size:17.4px;line-height:17.4px;font-weight:normal;color:#f0f0f0;transform:scaleX(0.9974);-webkit-text-stroke:.3px #f0f0f0;">-20</span>
<span class="t" style="left:1141.00px;top:551.62px;font-size:17.4px;line-height:17.4px;font-weight:normal;color:#f0f0f0;transform:scaleX(0.9974);-webkit-text-stroke:.3px #f0f0f0;">-30</span>
<span class="t" style="left:1141.00px;top:673.87px;font-size:17.4px;line-height:17.4px;font-weight:normal;color:#f0f0f0;transform:scaleX(0.9974);-webkit-text-stroke:.3px #f0f0f0;">-40</span>
<span class="t" style="left:1141.00px;top:796.12px;font-size:17.4px;line-height:17.4px;font-weight:normal;color:#f0f0f0;transform:scaleX(0.9974);-webkit-text-stroke:.3px #f0f0f0;">-50</span>
<span class="t" style="left:1141.00px;top:918.37px;font-size:17.4px;line-height:17.4px;font-weight:normal;color:#f0f0f0;transform:scaleX(0.9974);-webkit-text-stroke:.3px #f0f0f0;">-60</span>
<span class="t" style="left:1141.00px;top:1040.62px;font-size:17.4px;line-height:17.4px;font-weight:normal;color:#f0f0f0;transform:scaleX(0.9974);-webkit-text-stroke:.3px #f0f0f0;">-70</span>
<span class="t" style="left:1141.00px;top:1150.27px;font-size:17.4px;line-height:17.4px;font-weight:normal;color:#f0f0f0;transform:scaleX(0.9974);-webkit-text-stroke:.3px #f0f0f0;">-80</span>
<span class="t" style="left:1294.82px;top:195.47px;font-size:17.4px;line-height:17.4px;font-weight:normal;color:#f0f0f0;transform:scaleX(0.9846);-webkit-text-stroke:.3px #f0f0f0;">18</span>
<span class="t" style="left:1294.82px;top:293.54px;font-size:17.4px;line-height:17.4px;font-weight:normal;color:#f0f0f0;transform:scaleX(0.9846);-webkit-text-stroke:.3px #f0f0f0;">12</span>
<span class="t" style="left:1304.70px;top:402.21px;font-size:17.4px;line-height:17.4px;font-weight:normal;color:#f0f0f0;transform:scaleX(0.9444);-webkit-text-stroke:.3px #f0f0f0;">6</span>
<span class="t" style="left:1304.70px;top:510.88px;font-size:17.4px;line-height:17.4px;font-weight:normal;color:#f0f0f0;transform:scaleX(0.9444);-webkit-text-stroke:.3px #f0f0f0;">0</span>
<span class="t" style="left:1297.70px;top:619.55px;font-size:17.4px;line-height:17.4px;font-weight:normal;color:#f0f0f0;transform:scaleX(1.0479);-webkit-text-stroke:.3px #f0f0f0;">-6</span>
<span class="t" style="left:1288.80px;top:728.22px;font-size:17.4px;line-height:17.4px;font-weight:normal;color:#f0f0f0;transform:scaleX(0.9974);-webkit-text-stroke:.3px #f0f0f0;">-12</span>
<span class="t" style="left:1288.80px;top:836.89px;font-size:17.4px;line-height:17.4px;font-weight:normal;color:#f0f0f0;transform:scaleX(0.9974);-webkit-text-stroke:.3px #f0f0f0;">-18</span>
<span class="t" style="left:1288.80px;top:945.56px;font-size:17.4px;line-height:17.4px;font-weight:normal;color:#f0f0f0;transform:scaleX(0.9583);-webkit-text-stroke:.3px #f0f0f0;">-24</span>
<span class="t" style="left:1288.80px;top:1054.23px;font-size:17.4px;line-height:17.4px;font-weight:normal;color:#f0f0f0;transform:scaleX(0.9974);-webkit-text-stroke:.3px #f0f0f0;">-30</span>
<span class="t" style="left:1288.80px;top:1150.27px;font-size:17.4px;line-height:17.4px;font-weight:normal;color:#f0f0f0;transform:scaleX(0.9974);-webkit-text-stroke:.3px #f0f0f0;">-36</span>
<span class="t" style="left:1195.59px;top:1178.63px;font-size:22.4px;line-height:22.4px;font-weight:normal;color:#f4f4f4;transform:scaleX(1.0070);-webkit-text-stroke:.3px #f4f4f4;">-inf</span>
<span class="t" style="left:1326.00px;top:1178.63px;font-size:22.4px;line-height:22.4px;font-weight:normal;color:#f4f4f4;transform:scaleX(0.9892);-webkit-text-stroke:.3px #f4f4f4;">silence</span>
<div style="left:1022.8px;top:1117px;width:31.6px;height:19.8px;background:linear-gradient(180deg,#d3d6d8 0%,#c1c4c7 50%,#acafb2 100%);"></div>
<div style="left:1022.8px;top:1138.2px;width:31.6px;height:1.2px;background:#4a4d50;"></div>
<div style="left:1022.8px;top:1148.4px;width:31.6px;height:19.8px;background:linear-gradient(180deg,#d3d6d8 0%,#c1c4c7 50%,#acafb2 100%);"></div>
<div style="left:1022.8px;top:1169.6px;width:31.6px;height:1.2px;background:#4a4d50;"></div>
<div style="left:1022.8px;top:1179.4px;width:31.6px;height:19.8px;background:radial-gradient(ellipse at 50% 60%,#6fa6f0 0%,#4c82d4 70%,#3d6fc0 100%);border:1px solid #2c4f8c;"></div>
<div style="left:1022.8px;top:1200.6px;width:31.6px;height:1.2px;background:#4a4d50;"></div>
<div style="left:1022.8px;top:1210px;width:31.6px;height:19.8px;background:linear-gradient(180deg,#d3d6d8 0%,#c1c4c7 50%,#acafb2 100%);"></div>
<div style="left:1022.8px;top:1231.2px;width:31.6px;height:1.2px;background:#4a4d50;"></div>
<svg style="left:1032.6px;top:1120.3px" width="12" height="13"><rect x=".6" y=".4" width="3.6" height="12" rx="1.2" fill="#0b0c0e"/><rect x="7.2" y=".4" width="3.6" height="12" rx="1.2" fill="#0b0c0e"/></svg>
<svg style="left:1029.5px;top:1150.4px" width="18" height="16" viewBox="0 0 18 16"><rect x="1.2" y="7" width="9.6" height="7.6" fill="none" stroke="#0b0c0e" stroke-width="2.2"/><path d="M7.6 1.6H16.2V8.4" fill="none" stroke="#0b0c0e" stroke-width="2.2"/><path d="M16 1.8 L9.4 8.4" stroke="#0b0c0e" stroke-width="2.2"/></svg>
<svg style="left:1030.4px;top:1180.6px" width="17" height="18" viewBox="0 0 17 18"><path d="M4.8 4 A6.5 6.5 0 1 0 12.2 4" fill="none" stroke="#0a1438" stroke-width="2.3"/><path d="M8.5 .6 V8.6" stroke="#0a1438" stroke-width="2.4"/></svg>
<span class="t" style="left:1031.42px;top:1209.10px;font-size:22.2px;line-height:22.2px;font-weight:bold;color:#0b0c0e;transform:scaleX(0.9833);">?</span>
<div style="left:1115.6px;top:1210px;width:135px;height:19.4px;background:linear-gradient(180deg,#d3d6d8 0%,#c1c4c7 50%,#acafb2 100%);"></div>
<div style="left:1115.6px;top:1231px;width:135px;height:1.2px;background:#4a4d50;"></div>
<svg style="left:1174.7px;top:1213.2px" width="17" height="14" viewBox="0 0 17 14"><path fill-rule="evenodd" d="M0 0H16.2V12.8H0Z M1.6 1.5V11.3H13.7V1.5Z" fill="#0b0c0e"/><path d="M2.8 6.4 L6.7 3.6 V5.7 H8.5 V3.6 L12.4 6.4 L8.5 9.2 V7.1 H6.7 V9.2 Z" fill="#0b0c0e"/></svg>
<div style="left:1263.6px;top:1210px;width:135.6px;height:19.4px;background:linear-gradient(180deg,#d3d6d8 0%,#c1c4c7 50%,#acafb2 100%);"></div>
<div style="left:1263.6px;top:1231px;width:135.6px;height:1.2px;background:#4a4d50;"></div>
<svg style="left:1323.0px;top:1213.2px" width="17" height="14" viewBox="0 0 17 14"><path fill-rule="evenodd" d="M0 0H16.2V12.8H0Z M1.6 1.5V11.3H13.7V1.5Z" fill="#0b0c0e"/><path d="M2.8 6.4 L6.7 3.6 V5.7 H8.5 V3.6 L12.4 6.4 L8.5 9.2 V7.1 H6.7 V9.2 Z" fill="#0b0c0e"/></svg>
<div style="left:1005px;top:1268px;width:415px;height:54.6px;background:#2e2e2f;border-radius:7px;"></div>
<span class="t" style="left:1023.38px;top:1285.06px;font-size:22.6px;line-height:22.6px;font-weight:bold;color:#fff;transform:scaleX(0.9174);">UTILITIES</span>
<div class="pb" style="left:1273.5px;top:1272px;width:56.3px;height:46.8px;"></div>
<div class="pb" style="left:1336.2px;top:1272px;width:30px;height:46.8px;"></div>
<div class="pb" style="left:1372.6px;top:1272px;width:30.6px;height:46.8px;"></div>
<span class="t" style="left:1280.03px;top:1285.06px;font-size:22.6px;line-height:22.6px;font-weight:normal;color:#f0f0f0;transform:scaleX(0.9673);-webkit-text-stroke:.3px #f0f0f0;">Map</span>
<span class="t" style="left:1343.50px;top:1284.10px;font-size:22.2px;line-height:22.2px;font-weight:bold;color:#f4f4f4;transform:scaleX(1.1000);">?</span>
<svg style="left:1380.4px;top:1285.6px" width="15" height="18" viewBox="0 0 15 18"><rect x="1.4" y="1.2" width="11.6" height="14.7" fill="none" stroke="#f4f4f4" stroke-width="2.2"/><path d="M7.2 3.9 L11 8.6 L8.3 8.6 L8.3 9.6 L11 9.6 L7.2 14.3 L3.4 9.6 L6.1 9.6 L6.1 8.6 L3.4 8.6 Z" fill="#f4f4f4"/></svg>
<div style="left:999.2px;top:1338.8px;width:426.7px;height:20.9px;background:linear-gradient(180deg,#c3cacd 0%,#b6bbbf 50%,#a6a9ad 100%);border:1.3px solid #3c4043;box-shadow:inset 0 0 0 1px rgba(255,255,255,.22);"></div>
<svg style="left:1204.2px;top:1343.2px" width="17" height="14" viewBox="0 0 17 14"><path fill-rule="evenodd" d="M0 0H16.2V12.8H0Z M1.6 1.5V11.3H13.7V1.5Z" fill="#0b0c0e"/><path d="M2.8 6.4 L6.7 3.6 V5.7 H8.5 V3.6 L12.4 6.4 L8.5 9.2 V7.1 H6.7 V9.2 Z" fill="#0b0c0e"/></svg>
<svg style="left:1419px;top:1354px" width="22" height="22"><path d="M20.9 1.8 V20.7 H2 Z" fill="#0a0a0a"/></svg>
</div>
</body></html>
